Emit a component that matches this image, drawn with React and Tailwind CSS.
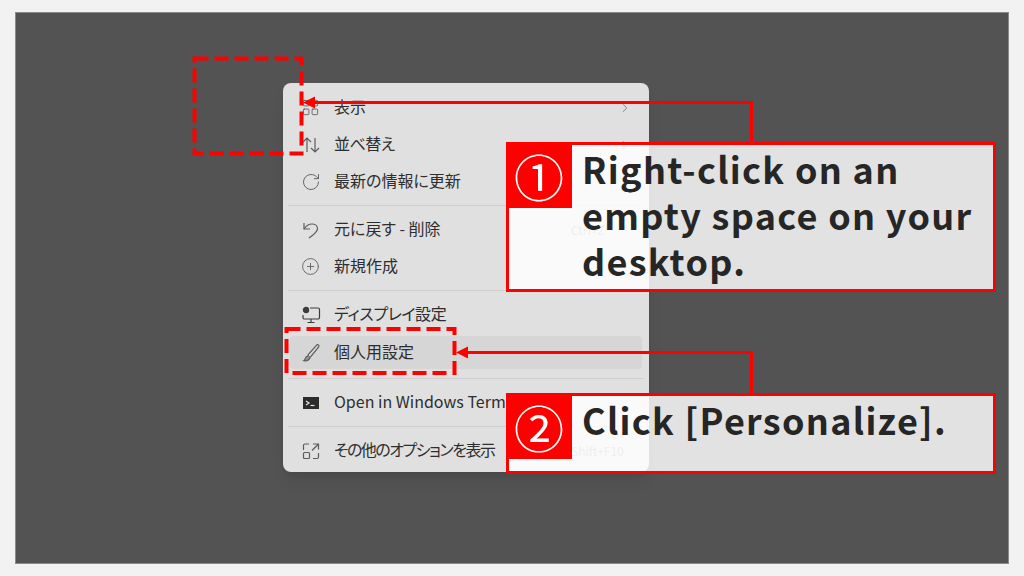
import React from 'react';
import { LayoutGrid, RotateCw, CirclePlus, ChevronRight } from 'lucide-react';

const jp = { fontFamily: '"Noto Sans CJK JP", "Noto Sans", sans-serif' };

const SortIcon = () => (
  <svg width="20" height="20" viewBox="0 0 20 20" fill="none" stroke="#5c5c5c" strokeWidth="1.2">
    <path d="M6 17V3M2 7l4-4 4 4M14 3v14M10 13l4 4 4-4" />
  </svg>
);

const UndoIcon = () => (
  <svg width="20" height="20" viewBox="0 0 20 20" fill="none" stroke="#5c5c5c" strokeWidth="1.2">
    <path d="M3 3v6h6" />
    <path d="M3 9c2-3 4.500-5 8-5 3 0 5.500 1.800 5.500 4.500 0 2.500-2 4.500-4.500 6.500l-4 3" />
  </svg>
);

const BrushIcon = () => (
  <svg width="20" height="20" viewBox="0 0 20 20" fill="none" stroke="#5c5c5c" strokeWidth="1.2">
    <path d="M17.500 2c.6.5.6 1.200.2 1.900L9.800 13.600c-.5.600-1.200.5-2 0-.7-.6-1-1.300-.6-1.900L15.400 2.300c.6-.7 1.400-.8 2.100-.3z" />
    <path d="M7.400 12.800c-1.800.3-2.800 1.300-3.300 3-.2.8-.6 1.400-1.300 1.900 2.800.4 5.400-.5 6.400-3.400" fill="#9a9a9a" />
  </svg>
);

const DisplayIcon = () => (
  <svg width="20" height="20" viewBox="0 0 20 20" fill="none" stroke="#3c3c3c" strokeWidth="1.2">
    <path d="M9 3h8a1.500 1.500 0 0 1 1.500 1.500v8A1.500 1.500 0 0 1 17 14H3.500A1.500 1.500 0 0 1 2 12.500V10" />
    <path d="M10 14v3M6.500 17.500h7" />
    <circle cx="5" cy="5" r="2.600" fill="#3c3c3c" />
  </svg>
);

const TerminalIcon = () => (
  <svg width="20" height="20" viewBox="0 0 20 20">
    <path d="M2 4h16v12H2z" fill="#2b2b2b" />
    <path d="M5 8l3 2-3 2" fill="none" stroke="#e6e6e6" strokeWidth="1.200" />
    <path d="M9.500 12.500h4" stroke="#e6e6e6" strokeWidth="1.200" />
  </svg>
);

const MoreIcon = () => (
  <svg width="20" height="20" viewBox="0 0 20 20" fill="none" stroke="#5c5c5c" strokeWidth="1.2">
    <path d="M8 3H4a1.500 1.500 0 0 0-1.500 1.500V9M12 17.500h4a1.500 1.500 0 0 0 1.500-1.500v-4" />
    <rect x="2.500" y="11.500" width="6" height="6" rx="1" />
    <path d="M12 3h5.500v5.500M17.500 3L11 9.500" />
  </svg>
);

const Sep = ({ h = 'h-[11px]' }) => (
  <div className={`${h} flex items-center px-[5px]`}>
    <div className="h-px w-full bg-[#cfcfcf]" />
  </div>
);

const Row = ({ icon, label, hint, chevron, active, tight = '' }) => (
  <div className={`mx-[7px] flex items-center pl-[11px] pr-[10px] text-[#2e2e2e] ${active ? 'my-[3px] h-[33px] rounded bg-[#d6d6d6]' : 'h-[37px]'}`}>
    <span className="flex w-[33px] shrink-0 items-center text-[#5c5c5c]">{icon}</span>
    <span className={`-mt-[3px] whitespace-nowrap text-[16px] [font-feature-settings:'palt'] ${tight}`}>{label}</span>
    {hint && <span className="absolute left-[288px] text-[12px] text-[#9a9a9a]">{hint}</span>}
    {chevron && <ChevronRight className="ml-auto text-[#666666]" size={14} strokeWidth={1.3} />}
  </div>
);

const Callout = ({ num, className, children }) => (
  <div className={`absolute left-[490px] w-[490px] border-[3px] border-[#ff0000] bg-[#ffffff]/[.83] ${className}`}>
    <div className="flex">
      <div className="-ml-[3px] -mt-[3px] flex h-[66px] w-[66px] shrink-0 items-center justify-center bg-[#ff0000] text-[50px] leading-none text-white" style={jp}>
        {num}
      </div>
      <div className="pl-[10px] text-[36px] font-semibold leading-[46px] tracking-[1.3px] text-[#262626]" style={jp}>
        {children}
      </div>
    </div>
  </div>
);

export default function App() {
  return (
    <div className="h-[576px] w-[1024px] overflow-hidden bg-[#f2f2f2] pl-[15px] pr-[15px] pt-[12px]" style={jp}>
      <div className="relative h-[552px] w-[994px] border border-[#8a8a8a] bg-[#535353]">
        {/* context menu */}
        <div className="relative ml-[267px] mt-[70px] h-[389px] w-[366px] rounded-lg bg-[#e0e0e0] pb-[5px] pt-[6px] shadow-lg">
          <Row icon={<LayoutGrid size={19} strokeWidth={1.1} />} label="表示" chevron />
          <Row icon={<SortIcon />} label="並べ替え" chevron tight="tracking-[-0.5px]" />
          <Row icon={<RotateCw size={20} strokeWidth={1.1} />} label="最新の情報に更新" />
          <Sep />
          <Row icon={<UndoIcon />} label="元に戻す - 削除" hint="Ctrl+Z" />
          <Row icon={<CirclePlus size={19} strokeWidth={1.1} />} label="新規作成" />
          <Sep />
          <Row icon={<DisplayIcon />} label="ディスプレイ設定" tight="tracking-[-0.4px]" />
          <Row icon={<BrushIcon />} label="個人用設定" active />
          <Sep h="h-[12px]" />
          <Row icon={<TerminalIcon />} label="Open in Windows Terminal" />
          <Sep />
          <Row icon={<MoreIcon />} label="その他のオプションを表示" hint="Shift+F10" tight="tracking-[-1.5px]" />
        </div>

        {/* annotations */}
        <svg className="absolute left-0 top-0" width="994" height="552" fill="none" stroke="#ff0000">
          <path d="M290 89.500H735.500V130" strokeWidth="3" />
          <path d="M287 89.500l12-6v12z" fill="#ff0000" stroke="none" />
          <path d="M445 339.500H735.500V382" strokeWidth="3" />
          <path d="M440 339.500l12-6v12z" fill="#ff0000" stroke="none" />
          <rect x="178.500" y="45.500" width="107" height="95" strokeWidth="4" strokeDasharray="14 6" />
          <rect x="270.500" y="316" width="168" height="44" strokeWidth="4" strokeDasharray="14 6" />
        </svg>

        <Callout num="①" className="top-[129px] h-[150px]">
          Right-click on an<br />empty space on your<br />desktop.
        </Callout>
        <Callout num="②" className="top-[380px] h-[81px]">
          Click [Personalize].
        </Callout>
      </div>
    </div>
  );
}
